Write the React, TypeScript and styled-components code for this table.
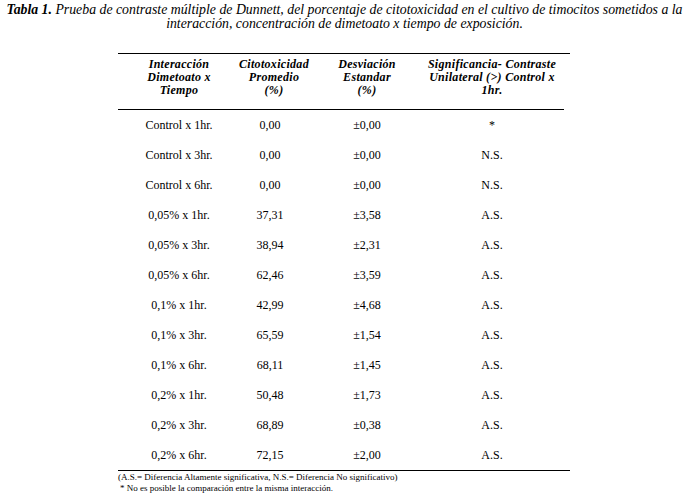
import React from "react";
import styled, { createGlobalStyle } from "styled-components";

const Global = createGlobalStyle`
  html, body { margin: 0; padding: 0; background: #fff; }
  body { font-family: "Liberation Serif", "Times New Roman", serif; color: #000; }
`;

const Page = styled.div`
  width: 689px;
  height: 498px;
  overflow: hidden;
  display: flex;
  flex-direction: column;
`;

const Caption = styled.div`
  padding-top: 3px;
  font-style: italic;
  font-size: 13.8px;
  line-height: 14px;
  text-align: center;
  white-space: nowrap;
`;

const CaptionLabel = styled.b`
  font-weight: bold;
`;

const TableWrap = styled.div`
  margin-left: 118px;
  margin-top: 22px;
  width: 452px;
  display: flex;
  flex-direction: column;
`;

const Grid = styled.div`
  display: grid;
  grid-template-columns: 122px 68px 118px 144px;
  border-top: 1px solid #000;
  border-bottom: 1px solid #000;
`;

const HeadCell = styled.div<{ $shift?: number }>`
  padding: 4px 0 0;
  height: 56px;
  box-sizing: border-box;
  border-bottom: 1px solid #000;
  font-weight: bold;
  font-style: italic;
  font-size: 12px;
  line-height: 13px;
  letter-spacing: 0.3px;
  text-align: center;
  white-space: nowrap;
  display: flex;
  flex-direction: column;
  align-items: center;
  transform: translateX(${(p) => p.$shift ?? 0}px);
`;

const Cell = styled.div<{ $shift?: number }>`
  height: 30px;
  display: flex;
  align-items: center;
  justify-content: center;
  font-size: 12px;
  white-space: nowrap;
  transform: translateX(${(p) => p.$shift ?? 0}px);
`;

const Notes = styled.div`
  padding-top: 1px;
  font-size: 9px;
  line-height: 11px;
  letter-spacing: 0px;
  white-space: nowrap;
`;

const NoteLine = styled.div<{ $indent?: number }>`
  padding-left: ${(p) => p.$indent ?? 0}px;
`;

const rows: [string, string, string, string][] = [
  ["Control x 1hr.", "0,00", "±0,00", "*"],
  ["Control x 3hr.", "0,00", "±0,00", "N.S."],
  ["Control x 6hr.", "0,00", "±0,00", "N.S."],
  ["0,05% x 1hr.", "37,31", "±3,58", "A.S."],
  ["0,05% x 3hr.", "38,94", "±2,31", "A.S."],
  ["0,05% x 6hr.", "62,46", "±3,59", "A.S."],
  ["0,1% x 1hr.", "42,99", "±4,68", "A.S."],
  ["0,1% x 3hr.", "65,59", "±1,54", "A.S."],
  ["0,1% x 6hr.", "68,11", "±1,45", "A.S."],
  ["0,2% x 1hr.", "50,48", "±1,73", "A.S."],
  ["0,2% x 3hr.", "68,89", "±0,38", "A.S."],
  ["0,2% x 6hr.", "72,15", "±2,00", "A.S."],
];

const headers: string[][] = [
  ["Interacción", "Dimetoato x", "Tiempo"],
  ["Citotoxicidad", "Promedio", "(%)"],
  ["Desviación", "Estandar", "(%)"],
  ["Significancia- Contraste", "Unilateral (>) Control x", "1hr."],
];

const headShift = [0, 0, 0, -6];
const cellShift = [0, -4, 0, -6];

export default function App() {
  return (
    <Page>
      <Global />
      <Caption>
        <CaptionLabel>Tabla 1.</CaptionLabel> Prueba de contraste múltiple de Dunnett, del porcentaje de citotoxicidad  en el cultivo de timocitos sometidos a la
        <br />
        interacción, concentración de dimetoato x tiempo de exposición.
      </Caption>
      <TableWrap>
        <Grid>
          {headers.map((h, i) => (
            <HeadCell key={i} $shift={headShift[i]}>
              {h.map((l) => (
                <span key={l}>{l}</span>
              ))}
            </HeadCell>
          ))}
          {rows.map((r, ri) =>
            r.map((c, ci) => (
              <Cell key={`${ri}-${ci}`} $shift={cellShift[ci]}>
                {c}
              </Cell>
            ))
          )}
        </Grid>
        <Notes>
          <NoteLine>(A.S.= Diferencia Altamente significativa, N.S.= Diferencia No significativo)</NoteLine>
          <NoteLine $indent={2}>* No es posible la comparación entre la misma interacción.</NoteLine>
        </Notes>
      </TableWrap>
    </Page>
  );
}
